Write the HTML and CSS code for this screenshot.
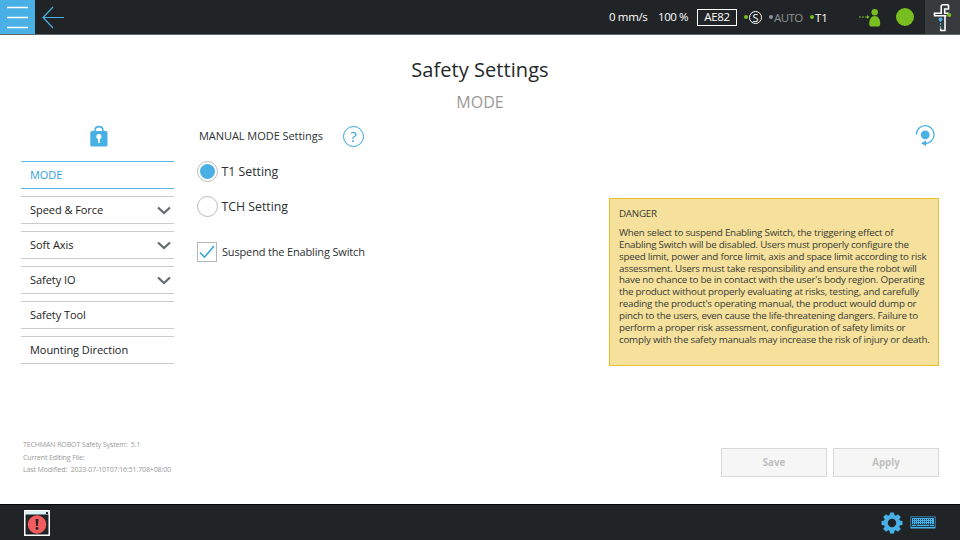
FILE: index.html
```html
<!DOCTYPE html>
<html lang="en">
<head>
<meta charset="utf-8">
<title>Safety Settings</title>
<link rel="stylesheet" href="styles.css">
</head>
<body>
<div class="app">
  <header class="topbar">
    <button class="menu-btn" aria-label="Menu">
      <svg width="35" height="34" viewBox="0 0 35 34"><path d="M7 7.500h21M7 17.500h21M7 27.500h21" stroke="#fff" stroke-width="1.600"/></svg>
    </button>
    <svg class="back" width="24" height="34" viewBox="0 0 24 34" fill="none" stroke="#48b0e5" stroke-width="1.200"><path d="M2 17.500h21M12 7L2 17.500 12 28"/></svg>
    <span class="speed">0 mm/s</span>
    <span class="percent">100 %</span>
    <span class="checksum">AE82</span>
    <span class="dot"></span>
    <span class="s-badge">S</span>
    <span class="dot dot-off"></span>
    <span class="auto">AUTO</span>
    <span class="dot"></span>
    <span class="t1">T1</span>
    <svg class="person" width="24" height="34" viewBox="0 0 24 34"><path d="M1 17h9" stroke="#78be20" stroke-dasharray="2 1"/><path d="M9 15l2.500 2-2.500 2z" fill="#78be20"/><circle cx="16.700" cy="12.200" r="3.200" fill="#78be20"/><path d="M11.200 24c0-5 2-8 5.500-8s5.500 3 5.500 8c0 1.700-1 2.600-2.700 2.600h-5.600c-1.700 0-2.700-.9-2.700-2.600z" fill="#78be20"/></svg>
    <span class="status"></span>
    <div class="robot">
      <svg width="35" height="34" viewBox="0 0 35 34" fill="none"><path d="M23.500 4.800h-5.500q-1.800 0-1.800 1.800v6.700H9.500v2.400h12M23.500 4.800v4.200h-3.800v4.300h4M20 15.700v14.800h-4.300v-2" stroke="#fff" stroke-width="1.600"/><path d="M15.500 20v8" stroke="#48b0e5" stroke-width="1.200" stroke-dasharray="2 1"/><circle cx="15.500" cy="19.300" r="1.900" fill="#48b0e5"/><circle cx="24.200" cy="15" r="2.100" fill="#78be20"/></svg>
    </div>
  </header>

  <main class="page">
    <h1 class="title">Safety Settings</h1>
    <h2 class="subtitle">MODE</h2>
    <div class="columns">
      <aside class="sidebar">
        <svg class="lock" width="18" height="22" viewBox="0 0 18 22"><path d="M5 8V5.500C5 3 6.500 1.600 9 1.600S13 3 13 5.500V8" fill="none" stroke="#48b0e5" stroke-width="1.600"/><rect x=".3" y="6" width="17.200" height="15.500" rx="1.500" fill="#48b0e5"/><circle cx="8.900" cy="11.500" r="2.600" fill="#fff"/><path d="M8.900 12v6" stroke="#fff" stroke-width="1.800"/></svg>
        <nav class="nav">
          <a class="item active"><span>MODE</span></a>
          <a class="item"><span>Speed &amp; Force</span><svg class="chev" width="14" height="9" viewBox="0 0 14 9"><path d="M1 1.500l6 5.500 6-5.500"/></svg></a>
          <a class="item"><span>Soft Axis</span><svg class="chev" width="14" height="9" viewBox="0 0 14 9"><path d="M1 1.500l6 5.500 6-5.500"/></svg></a>
          <a class="item"><span>Safety IO</span><svg class="chev" width="14" height="9" viewBox="0 0 14 9"><path d="M1 1.500l6 5.500 6-5.500"/></svg></a>
          <a class="item"><span>Safety Tool</span></a>
          <a class="item"><span>Mounting Direction</span></a>
        </nav>
        <div class="info">
          <p>TECHMAN ROBOT Safety System:&nbsp; 5.1</p>
          <p>Current Editing File:</p>
          <p>Last Modified:&nbsp; 2023-07-10T07:16:51.708+08:00</p>
        </div>
      </aside>

      <section class="settings">
        <div class="heading"><span class="heading-text">MANUAL MODE Settings</span>
          <span class="help">?</span>
        </div>
        <div class="option"><span class="radio on"></span><span>T1 Setting</span></div>
        <div class="option"><span class="radio"></span><span>TCH Setting</span></div>
        <div class="option check-row"><span class="check"><svg width="18" height="18" viewBox="0 0 18 18" fill="none" stroke="#2fa3df" stroke-width="1.500"><path d="M2 9.500l4.500 4.700L16 3"/></svg></span><span>Suspend the Enabling Switch</span></div>
      </section>

      <section class="right">
        <svg class="reload" width="22" height="24" viewBox="0 0 22 24"><path d="M1.300 10.500A8.900 8.900 0 1 1 10 19.500" fill="none" stroke="#48b0e5" stroke-width="1.300"/><path d="M6 19.200l5-2.700v5.400z" fill="#48b0e5"/><circle cx="10.200" cy="10.800" r="4.400" fill="#48b0e5"/></svg>
        <div class="danger">
          <h3>DANGER</h3>
          <p>When select to suspend Enabling Switch, the triggering effect of<br>Enabling Switch will be disabled. Users must properly configure the<br>speed limit, power and force limit, axis and space limit according to risk<br>assessment. Users must take responsibility and ensure the robot will<br>have no chance to be in contact with the user's body region. Operating<br>the product without properly evaluating at risks, testing, and carefully<br>reading the product's operating manual, the product would dump or<br>pinch to the users, even cause the life-threatening dangers. Failure to<br>perform a proper risk assessment, configuration of safety limits or<br>comply with the safety manuals may increase the risk of injury or death.</p>
        </div>
        <div class="actions"><button class="btn">Save</button><button class="btn">Apply</button></div>
      </section>
    </div>
  </main>

  <footer class="bottombar">
    <svg class="alert" width="26" height="26" viewBox="0 0 26 26"><rect x=".75" y=".75" width="24.500" height="24.500" fill="#202426" stroke="#fff" stroke-width="1.500"/><path d="M1 1h24v3.500H1z" fill="#dceef6"/><path d="M22 2h2v2h-2z" fill="#202426"/><circle cx="13" cy="14.500" r="9.300" fill="#f25c5f"/><path d="M11.500 9h3l-.7 7h-1.600z" fill="#202426"/><circle cx="13" cy="18.500" r="1.400" fill="#202426"/></svg>
    <svg class="gear" width="22" height="22" viewBox="-11 -11 22 22"><g fill="#48b0e5"><path d="M-2-10.500h4l.7 4h-5.400z" id="t"/><use href="#t" transform="rotate(45)"/><use href="#t" transform="rotate(90)"/><use href="#t" transform="rotate(135)"/><use href="#t" transform="rotate(180)"/><use href="#t" transform="rotate(225)"/><use href="#t" transform="rotate(270)"/><use href="#t" transform="rotate(315)"/></g><circle r="6.200" fill="none" stroke="#48b0e5" stroke-width="4"/></svg>
    <svg class="keyboard" width="26" height="13" viewBox="0 0 26 13"><rect x=".5" y=".5" width="25" height="12" fill="#48b0e5"/><path d="M1.500 1.500h23v9h-23z" fill="none" stroke="#1b3b4c"/><path d="M3 3.500h20M3 5.500h20M3 7.500h20" stroke="#1b3b4c" stroke-dasharray="1 1"/><path d="M2 8.500h22M6.500 8v3M19.500 8v3" stroke="#1b3b4c" stroke-width=".8"/></svg>
  </footer>
</div>
</body>
</html>
```
FILE: styles.css
```css
* { box-sizing: border-box; }
body { margin: 0; font-family: "Open Sans", "Noto Sans", sans-serif; color: #2b2f31; }
.app { width: 960px; height: 540px; display: flex; flex-direction: column; background: #fff; overflow: hidden; white-space: nowrap; }
h1, h2, h3, p { margin: 0; font-weight: 400; }
svg { display: block; flex: none; }
button { padding: 0; font-family: inherit; }

.topbar { height: 35px; flex: none; display: flex; align-items: center; background: #202426; border-bottom: 1px solid #66696b; color: #fff; font-size: 11.5px; }
.topbar span { flex: none; }
.menu-btn { width: 35px; height: 34px; border: 0; background: #48b0e5; }
.back { margin-left: 6px; }
.speed { margin-left: 544px; width: 49px; padding-bottom: 2px; letter-spacing: -.35px; }
.percent { width: 39px; padding-bottom: 2px; letter-spacing: -.4px; }
.checksum { width: 40px; height: 17px; border: 1px solid #fff; text-align: center; line-height: 14px; letter-spacing: -.3px; }
.dot { width: 4px; height: 4px; border-radius: 50%; background: #78be20; margin-left: 7px; }
.dot-off { background: #909395; }
.s-badge { width: 13px; height: 13px; border: 1px solid #fff; border-radius: 50%; line-height: 11px; text-align: center; font-size: 11px; margin-left: 1px; }
.auto { width: 29px; margin-left: 1px; padding-top: 1px; color: #909395; letter-spacing: -.55px; }
.t1 { width: 16px; margin-left: 1px; padding-top: 1px; }
.person { margin-left: 27px; }
.status { width: 18px; height: 18px; border-radius: 50%; background: #78be20; margin-left: 14px; }
.robot { width: 35px; height: 34px; margin-left: auto; background: #373b3e; }

.page { flex: 1; padding: 19px 21px 0; display: flex; flex-direction: column; }
.title { height: 33px; line-height: 32px; font-size: 20px; text-align: center; color: #24282a; letter-spacing: .05px; }
.subtitle { height: 31px; line-height: 31px; font-size: 16px; text-align: center; color: #999; }
.columns { flex: 1; display: grid; grid-template-columns: 153px 1fr 330px; }

.sidebar { padding-top: 7px; }
.lock { margin-left: 69px; }
.nav { margin-top: 14px; display: flex; flex-direction: column; gap: 7.1px; }
.item { height: 28px; padding: 0 3px 0 9px; display: flex; align-items: center; justify-content: space-between; border-top: 1px solid #c9cbcc; border-bottom: 1px solid #c9cbcc; font-size: 11px; letter-spacing: -.05px; color: #222; }
.item span { padding-bottom: 1px; }
.active { border-color: #5db9e7; color: #2fa3df; }
.chev { fill: none; stroke: #626b6e; stroke-width: 2.2; }
.info { margin: 74.5px 0 0 2px; font-size: 7px; line-height: 12.7px; color: #999; letter-spacing: -.12px; }

.settings { padding: 6px 0 0 23px; }
.heading { height: 24px; display: flex; align-items: center; font-size: 11px; }
.heading-text { width: 144px; margin-left: 2px; padding-bottom: 2px; letter-spacing: -.05px; }
.help { width: 21px; height: 21px; border: 1.5px solid #2fa3df; border-radius: 50%; color: #2fa3df; font-size: 15px; line-height: 18px; text-align: center; }
.option { height: 21px; margin-top: 14px; display: flex; align-items: center; gap: 3.5px; font-size: 12.3px; }
.heading + .option { margin-top: 13px; }
.radio { width: 21px; height: 21px; border: 1px solid #bbb; border-radius: 50%; display: grid; place-items: center; }
.on::after { content: ""; width: 15px; height: 15px; border-radius: 50%; background: #48b0e5; }
.check-row { margin-top: 24px; font-size: 11px; gap: 5px; letter-spacing: -.16px; }
.check { width: 20px; height: 20px; border: 1px solid #b4b6b8; }

.right { display: flex; flex-direction: column; padding-top: 6px; }
.reload { margin-left: 306px; }
.danger { width: 330px; height: 168px; margin-top: 50px; padding: 7px 9px; border: 1px solid #e9c12c; background: #f6e19c; font-size: 9.8px; line-height: 11.85px; letter-spacing: -.235px; color: #363a35; }
.danger h3 { font-size: 9.8px; line-height: 15px; }
.danger p { margin-top: 6px; }
.actions { display: flex; justify-content: flex-end; gap: 6px; margin-top: 82px; }
.btn { width: 106px; height: 29px; border: 1px solid #d8d8d8; background: #f6f6f6; color: #c0c0c0; font-size: 9.7px; font-weight: 700; }

.bottombar { height: 36px; flex: none; display: flex; align-items: center; background: #202426; border-top: 1px solid #050606; }
.alert { margin-left: 24px; }
.gear { margin-left: 831px; }
.keyboard { margin-left: 7px; }
```
